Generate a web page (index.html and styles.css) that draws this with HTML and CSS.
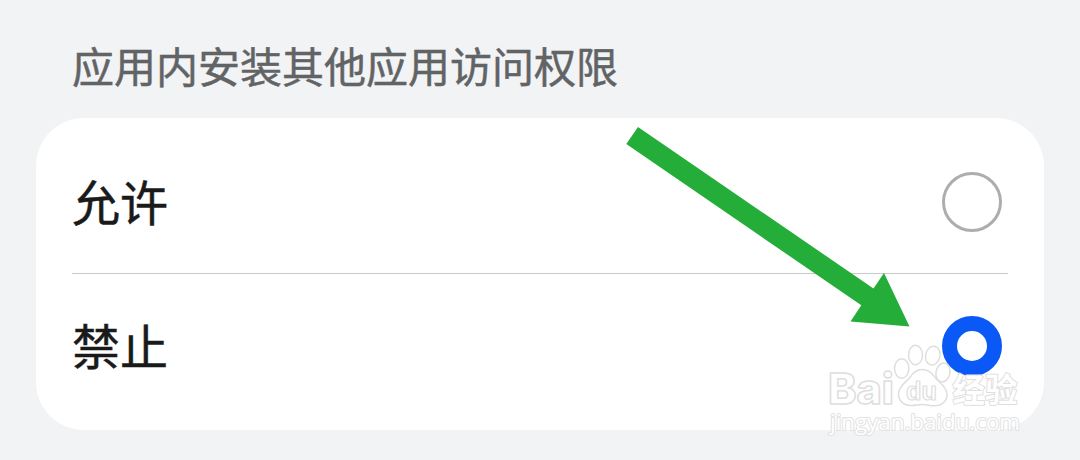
FILE: index.html
```html
<!DOCTYPE html>
<html lang="zh-CN">
<head>
    <title>应用内安装其他应用访问权限</title>
    <meta charset="utf-8">
    <meta name="viewport" content="width=device-width, initial-scale=1">
    <link rel="stylesheet" href="styles.css">
</head>
<body>
    <h1 class="section-title">应用内安装其他应用访问权限</h1>

    <div class="option-card">
        <label class="option">
            <span class="option-text">允许</span>
            <input type="radio" class="radio" name="install_permission" value="allow">
        </label>
        <label class="option">
            <span class="option-text">禁止</span>
            <input type="radio" class="radio" name="install_permission" value="deny" checked>
        </label>
    </div>

    <!-- 箭头和水印 -->
    <svg class="overlay" viewBox="0 0 1080 460">
        <polygon class="arrow" points="638,127 873.5,288.5 884,273 909.5,326.5 850.5,321.5 861.3,305.3 626.3,144"/>
        <g class="watermark">
            <text class="wm-logo" x="828" y="403.5" textLength="66" lengthAdjust="spacingAndGlyphs">Bai</text>
            <ellipse cx="901.7" cy="368.5" rx="7.2" ry="9.8"/>
            <ellipse cx="915.5" cy="355" rx="7" ry="9.8"/>
            <ellipse cx="932.8" cy="355.6" rx="7.2" ry="9.5" transform="rotate(12 932.8 355.6)"/>
            <ellipse cx="943" cy="372.5" rx="7" ry="9.5" transform="rotate(12 943 372.5)"/>
            <path d="M922 369.5c-6 0-9 3-12 8-3 4-11 8-11.5 16-.2 7 5 12 12 12 5 0 7-1 12-1s7 1.3 12 1.3c8 0 12.5-5 12.5-11.5 0-8-8.5-12-12-17-3-4.500-7-7.800-13-7.800z"/>
            <text class="wm-du" x="906" y="399.5" textLength="31" lengthAdjust="spacingAndGlyphs">du</text>
            <text class="wm-cn" x="952.5" y="401.5" textLength="65" lengthAdjust="spacingAndGlyphs">经验</text>
            <text class="wm-url" x="830" y="430" textLength="190" lengthAdjust="spacingAndGlyphs">jingyan.baidu.com</text>
        </g>
    </svg>
</body>
</html>
```

FILE: styles.css
```css
body {
    font-family: "Noto Sans CJK SC", sans-serif;
    margin: 0;
    padding: 33px 36px 30px;
    height: 460px;
    box-sizing: border-box;
    background-color: #f1f3f5;
    overflow: hidden;
}
.section-title {
    margin: 0 0 21px;
    padding: 0 36px;
    font-size: 42px;
    line-height: 64px;
    font-weight: 400;
    color: #626365;
    -webkit-text-stroke: 0.5px #626365;
}
.option-card {
    background-color: white;
    border-radius: 48px;
    padding: 12px 36px;
}
.option {
    display: flex;
    justify-content: space-between;
    align-items: center;
    height: 144px;
    box-sizing: border-box;
    padding-right: 6px;
    font-size: 48px;
    line-height: 72px;
    color: #1a1a1a;
}
.option:first-child {
    border-bottom: 1px solid #c9c9c9;
    padding-top: 1px;
}
.option-text {
    padding-bottom: 5px;
    -webkit-text-stroke: 0.5px #1a1a1a;
}
.radio {
    appearance: none;
    width: 60px;
    height: 60px;
    margin: 0;
    box-sizing: border-box;
    border: 3px solid #adadad;
    border-radius: 50%;
    background-color: white;
}
.radio:checked {
    border: 15px solid #0a59f7;
}
.overlay {
    position: absolute;
    top: 0;
    left: 0;
    width: 1080px;
    height: 460px;
    pointer-events: none;
}
.arrow {
    fill: #24ad38;
}
.watermark {
    fill: white;
    stroke: #dedede;
    stroke-width: 1.5;
    stroke-linejoin: round;
}
.wm-logo {
    font: 800 42px Inter, sans-serif;
}
.wm-du {
    font: bold 25px "Liberation Sans", sans-serif;
    stroke-width: 1.2;
}
.wm-cn {
    font: bold 33px "Noto Sans CJK SC", sans-serif;
    paint-order: stroke;
    stroke-width: 2;
}
.wm-url {
    font: 500 21px "Open Sans", sans-serif;
    paint-order: stroke;
    stroke: #e2e2e3;
    stroke-width: 2;
}
```
